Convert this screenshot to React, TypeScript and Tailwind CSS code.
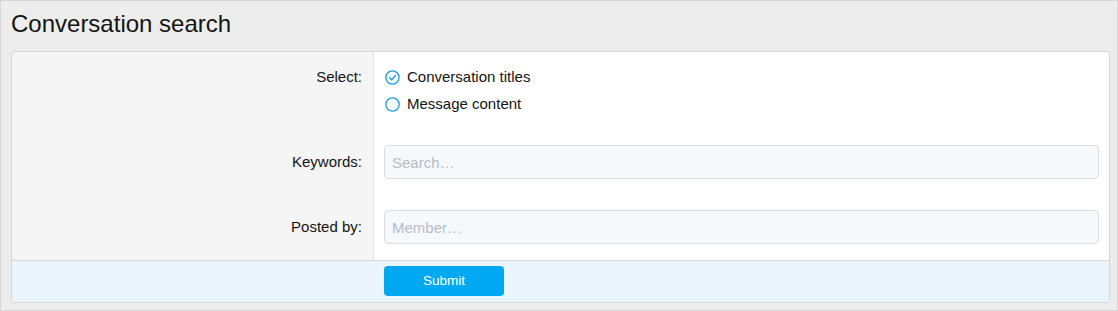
import React from "react";

function CheckCircle() {
  return (
    <svg width="15" height="15" viewBox="0 0 15 15" fill="none">
      <circle cx="7.5" cy="7.5" r="6.6" stroke="#1a9be6" strokeWidth="1.3" />
      <path d="M4.6 7.7 L6.7 9.7 L10.5 5.6" stroke="#1a9be6" strokeWidth="1.4" strokeLinecap="round" strokeLinejoin="round" />
    </svg>
  );
}

function EmptyCircle() {
  return (
    <svg width="15" height="15" viewBox="0 0 15 15" fill="none">
      <circle cx="7.5" cy="7.5" r="6.6" stroke="#1a9be6" strokeWidth="1.3" />
    </svg>
  );
}

export default function App() {
  return (
    <div
      className="w-[1118px] h-[311px] bg-[#ededed] border border-[#d6d6d6] pl-[10px] text-[#141414]"
      style={{ fontFamily: '"Liberation Sans", Arial, sans-serif' }}
    >
      <h1 className="text-[24px] leading-[28px] pt-[9px] pb-[13px] font-normal">Conversation search</h1>
      <div className="w-[1099px] border border-[#d6d6d6] rounded-[3px] bg-white overflow-hidden">
        {/* Row 1 */}
        <div className="flex">
          <div className="w-[362px] shrink-0 bg-[#f5f5f5] border-r border-[#e2e2e2] pr-[11px] pt-[12px] pb-[17px] flex justify-end">
            <div className="h-[27px] flex items-center text-[15px]">Select:</div>
          </div>
          <div className="flex-1 pl-[11px] pt-[12px] pb-[17px] text-[15px]">
            <div className="h-[27px] flex items-center gap-[7px]">
              <CheckCircle />
              <span>Conversation titles</span>
            </div>
            <div className="h-[27px] flex items-center gap-[7px]">
              <EmptyCircle />
              <span>Message content</span>
            </div>
          </div>
        </div>
        {/* Row 2 */}
        <div className="flex">
          <div className="w-[362px] shrink-0 bg-[#f5f5f5] border-r border-[#e2e2e2] pr-[11px] pt-[10px] pb-[15px] flex justify-end">
            <div className="h-[34px] flex items-center text-[15px]">Keywords:</div>
          </div>
          <div className="flex-1 pl-[10px] pr-[10px] pt-[10px] pb-[15px]">
            <input
              placeholder="Search…"
              className="w-full h-[34px] rounded-[4px] border border-[#d8dde2] bg-[#f5f9fc] px-[7px] text-[15px] placeholder:text-[#b6bcc4] outline-none"
            />
          </div>
        </div>
        {/* Row 3 */}
        <div className="flex">
          <div className="w-[362px] shrink-0 bg-[#f5f5f5] border-r border-[#e2e2e2] pr-[11px] pt-[16px] pb-[16px] flex justify-end">
            <div className="h-[34px] flex items-center text-[15px]">Posted by:</div>
          </div>
          <div className="flex-1 pl-[10px] pr-[10px] pt-[16px] pb-[16px]">
            <input
              placeholder="Member…"
              className="w-full h-[34px] rounded-[4px] border border-[#d8dde2] bg-[#f5f9fc] px-[7px] text-[15px] placeholder:text-[#b6bcc4] outline-none"
            />
          </div>
        </div>
        {/* Footer */}
        <div className="border-t border-[#d6d6d6] bg-[#eaf5fe] pl-[372px] pt-[5px] pb-[6px]">
          <button className="w-[120px] h-[30px] rounded-[4px] bg-[#02a9f2] text-white text-[13.5px]">
            Submit
          </button>
        </div>
      </div>
    </div>
  );
}
